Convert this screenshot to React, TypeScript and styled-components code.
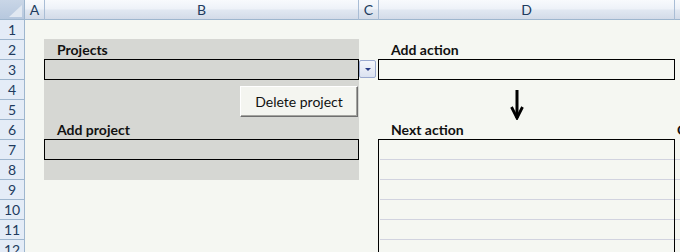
import * as React from 'react';
import styled, { createGlobalStyle } from 'styled-components';

// column template shared by the header strip and the cell grid:
// row numbers, A, B, C, D, E (E runs past the window edge)
const COLS = '25px 20px 314px 20px 296px 120px';

const GlobalStyle = createGlobalStyle`
  html, body {
    margin: 0;
    padding: 0;
    overflow: hidden;
    background: #f5f7f2;
  }

  body {
    font-family: Lato, "Liberation Sans", sans-serif;
  }
`;

const Sheet = styled.div`
  width: 680px;
  height: 252px;
  overflow: hidden;
  display: flex;
  flex-direction: column;
  background: #f5f7f2;
`;

const HeaderStrip = styled.div`
  display: grid;
  grid-template-columns: ${ COLS };
  height: 20px;
  flex: none;
`;

const Corner = styled.div`
  position: relative;
  background: linear-gradient(#c9d6e7, #b7c8de);
  border-right: 1px solid #9eb6ce;
  border-bottom: 1px solid #9eb6ce;

  &::after {
    content: '';
    position: absolute;
    right: 2px;
    bottom: 2px;
    width: 13px;
    height: 12px;
    background: #e1e8f1;
    clip-path: polygon(100% 0, 100% 100%, 0 100%);
  }
`;

const ColHead = styled.div`
  display: flex;
  align-items: center;
  justify-content: center;
  background: linear-gradient(#f8fafd 0%, #eef2f8 45%, #e0e7f1 55%, #d3dbe8 100%);
  border-right: 1px solid #a9bdd5;
  border-bottom: 1px solid #9eb6ce;
  font-size: 14px;
  color: #213b5e;
`;

const Cells = styled.div`
  display: grid;
  grid-template-columns: ${ COLS };
  grid-template-rows: repeat(12, 20px);
  flex: none;
`;

const RowHead = styled.div<{ $row: number }>`
  grid-column: 1;
  grid-row: ${ p => p.$row };
  display: flex;
  align-items: center;
  justify-content: center;
  background: #e4ecf7;
  border-right: 1px solid #9eb6ce;
  border-bottom: 1px solid #9eb6ce;
  font-size: 14px;
  color: #213b5e;
`;

const Panel = styled.div`
  grid-column: 3;
  grid-row: 2 / 9;
  margin: -1px 0 0 -1px;
  background: #d6d7d3;
`;

const Label = styled.div<{ $col: number; $row: number; $indent?: number }>`
  grid-column: ${ p => p.$col };
  grid-row: ${ p => p.$row };
  align-self: end;
  margin-bottom: 2px;
  padding-left: ${ p => p.$indent ?? 12 }px;
  font-size: 14px;
  line-height: 17px;
  font-weight: 700;
  color: #111;
  white-space: nowrap;
`;

const Field = styled.div<{ $col: number; $row: number }>`
  grid-column: ${ p => p.$col };
  grid-row: ${ p => p.$row };
  margin: -1px 0 0 -1px;
  border: 1px solid #000;
`;

const ListBox = styled.div`
  grid-column: 5;
  grid-row: 7 / 13;
  margin: -1px 0 0 -1px;
  border: 1px solid #000;
  border-bottom: none;
  padding-left: 1px;
  display: flex;
  flex-direction: column;
`;

const Spill = styled.div`
  grid-column: 6;
  grid-row: 7 / 13;
  display: flex;
  flex-direction: column;
`;

const ListLine = styled.div`
  height: 20px;
  flex: none;
  box-sizing: border-box;
  border-bottom: 1px solid #d1d3df;
`;

const DropButton = styled.div`
  grid-column: 4;
  grid-row: 3;
  justify-self: start;
  align-self: start;
  width: 17px;
  height: 18px;
  box-sizing: border-box;
  border: 1px solid #9aa9cf;
  border-radius: 2px;
  background: linear-gradient(#f4f6fb, #dbe2f1);
  display: flex;
  align-items: center;
  justify-content: center;

  &::before {
    content: '';
    width: 0;
    height: 0;
    border-left: 3px solid transparent;
    border-right: 3px solid transparent;
    border-top: 3px solid #2a3d86;
  }
`;

const Button = styled.div`
  grid-column: 3;
  grid-row: 4 / 6;
  justify-self: end;
  align-self: start;
  margin: 6px 1px 0 0;
  width: 118px;
  height: 31px;
  box-sizing: border-box;
  border: 1px solid;
  border-color: #ffffff #6f6f6f #6f6f6f #ffffff;
  box-shadow: inset -1px -1px 0 #a4a4a0;
  background: #f4f5f0;
  display: flex;
  align-items: center;
  justify-content: center;
  font-size: 14px;
  color: #111;
`;

const Arrow = styled.svg`
  grid-column: 5;
  grid-row: 4 / 6;
  justify-self: start;
  align-self: start;
  margin: 10px 0 0 131px;
`;

const App = () =>
{
    const rows = Array.from( { length: 12 }, ( _, i ) => i + 1 );

    return (
        <Sheet>
            <GlobalStyle/>
            <HeaderStrip>
                <Corner/>
                <ColHead>A</ColHead>
                <ColHead>B</ColHead>
                <ColHead>C</ColHead>
                <ColHead>D</ColHead>
                <ColHead>E</ColHead>
            </HeaderStrip>
            <Cells>
                { rows.map( r => <RowHead key={ r } $row={ r }>{ r }</RowHead> ) }

                <Panel/>
                <Label $col={ 3 } $row={ 2 }>Projects</Label>
                <Field $col={ 3 } $row={ 3 }/>
                <Button>Delete project</Button>
                <Label $col={ 3 } $row={ 6 }>Add project</Label>
                <Field $col={ 3 } $row={ 7 }/>

                <DropButton/>

                <Label $col={ 5 } $row={ 2 }>Add action</Label>
                <Field $col={ 5 } $row={ 3 }/>
                <Arrow width="14" height="30" viewBox="0 0 14 30">
                    <path d="M7 0 V28" stroke="#000" strokeWidth="3" fill="none"/>
                    <path d="M1.5 17 L7 28 L12.5 17" stroke="#000" strokeWidth="2.8" fill="none"/>
                </Arrow>
                <Label $col={ 5 } $row={ 6 }>Next action</Label>
                <ListBox>
                    { [ 0, 1, 2, 3, 4, 5 ].map( i => <ListLine key={ i }/> ) }
                </ListBox>

                <Label $col={ 6 } $row={ 6 } $indent={ 2 }>Context</Label>
                <Spill>
                    { [ 0, 1, 2, 3, 4, 5 ].map( i => <ListLine key={ i }/> ) }
                </Spill>
            </Cells>
        </Sheet>
    );
};

export default App;
